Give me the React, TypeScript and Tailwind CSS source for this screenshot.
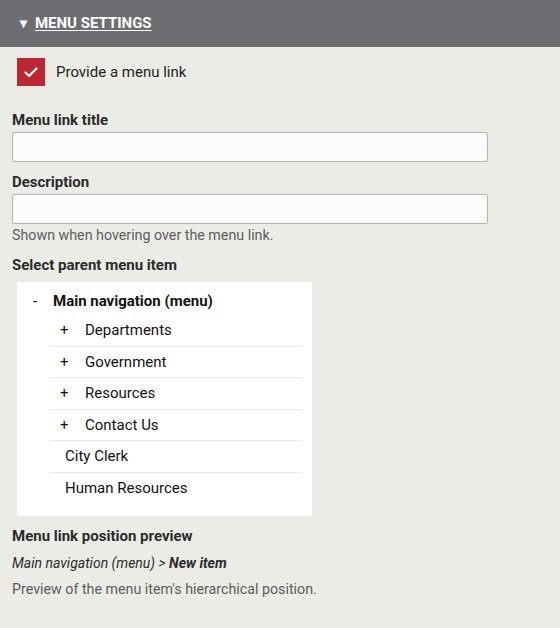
const children = [
  { label: 'Departments', expandable: true },
  { label: 'Government', expandable: true },
  { label: 'Resources', expandable: true },
  { label: 'Contact Us', expandable: true },
  { label: 'City Clerk', expandable: false },
  { label: 'Human Resources', expandable: false },
];

function TextField({ label }: { label: string }) {
  return (
    <div>
      <label className="block text-[15px] leading-[20px] font-bold text-[#2b2b2b]">{label}</label>
      <input
        type="text"
        className="mt-[2px] block h-[30px] w-[476px] rounded-[2px] border border-[#b4b4b4] bg-[#fcfcfa] px-2 outline-none"
      />
    </div>
  );
}

export default function App() {
  return (
    <div
      className="min-h-[628px] w-[560px] bg-[#ecece6]"
      style={{ fontFamily: 'Roboto, "Liberation Sans", sans-serif' }}
    >
      <div className="flex h-[47px] items-center bg-[#6d6e72] pl-[17px] text-white">
        <span className="mr-[5px] text-[13px] leading-none">▼</span>
        <span className="text-[15px] font-bold uppercase underline underline-offset-2">Menu settings</span>
      </div>

      <div className="px-[12px]">
        <label className="ml-[5px] mt-[11px] flex items-center gap-[11px]">
          <span className="flex h-[28px] w-[28px] items-center justify-center bg-[#bb2630]">
            <svg width="14" height="11" viewBox="0 0 14 11" fill="none">
              <path d="M1.5 5.5 L5 9 L12.5 1.5" stroke="white" strokeWidth="2.2" strokeLinecap="round" strokeLinejoin="round" />
            </svg>
          </span>
          <span className="text-[15px] text-[#1e1e1e]">Provide a menu link</span>
        </label>

        <div className="mt-[24px]">
          <TextField label="Menu link title" />
        </div>
        <div className="mt-[10px]">
          <TextField label="Description" />
          <p className="mt-[1px] text-[14.25px] leading-[20px] text-[#5c5c5c]">Shown when hovering over the menu link.</p>
        </div>

        <div className="mt-[10px] text-[15px] leading-[20px] font-bold text-[#2b2b2b]">Select parent menu item</div>

        <div className="ml-[5px] mt-[7px] w-[295px] bg-white pt-[9px] pb-[12px] text-[15px] text-[#111]">
          <div className="flex pl-[16px] leading-[20px]">
            <span className="w-[20px]">-</span>
            <span className="font-bold">Main navigation (menu)</span>
          </div>
          <ul className="ml-[32px] mr-[10px] mt-[4px]">
            {children.map((item, i) => (
              <li
                key={item.label}
                className={`flex h-[31.5px] items-center ${i < children.length - 1 ? 'border-b border-[#ebebeb]' : ''} ${item.expandable ? 'pl-[11px]' : 'pl-[16px]'}`}
              >
                {item.expandable && <span className="w-[25px]">+</span>}
                <span>{item.label}</span>
              </li>
            ))}
          </ul>
        </div>

        <div className="mt-[10px] text-[15px] leading-[20px] font-bold text-[#2b2b2b]">Menu link position preview</div>
        <p className="mt-[7px] text-[14px] leading-[20px] italic text-[#2b2b2b]">
          Main navigation (menu) &gt; <span className="font-bold">New item</span>
        </p>
        <p className="mt-[6px] text-[14.25px] leading-[20px] text-[#5c5c5c]">Preview of the menu item's hierarchical position.</p>
      </div>
    </div>
  );
}
